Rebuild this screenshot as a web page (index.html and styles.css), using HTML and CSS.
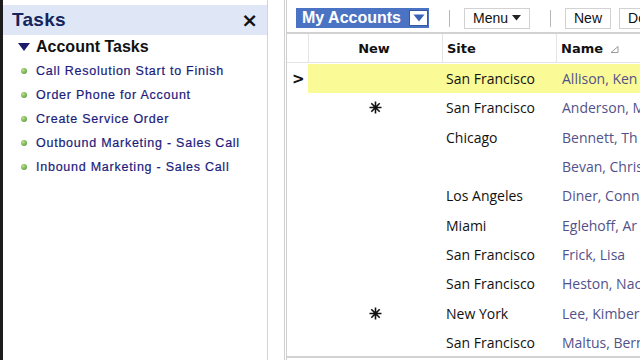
FILE: index.html
```html
<!DOCTYPE html>
<html>
<head>
<meta charset="utf-8">
<link rel="stylesheet" href="styles.css">
</head>
<body>
<div class="page">
  <aside class="tasks">
    <div class="tasks-head">
      <span class="tasks-title">Tasks</span>
      <span class="close">×</span>
    </div>
    <div class="group-title"><span class="tri"></span>Account Tasks</div>
    <ul class="task-list">
      <li><span class="dot"></span>Call Resolution Start to Finish</li>
      <li><span class="dot"></span>Order Phone for Account</li>
      <li><span class="dot"></span>Create Service Order</li>
      <li><span class="dot"></span>Outbound Marketing - Sales Call</li>
      <li><span class="dot"></span>Inbound Marketing - Sales Call</li>
    </ul>
  </aside>
  <div class="gutter"></div>
  <main class="main">
    <div class="toolbar">
      <div class="view-select">My Accounts<span class="dd"><svg width="14" height="10" viewBox="0 0 14 10"><path d="M1.5 1.5h11L7 8.5z" fill="#3a63b8"/></svg></span></div>
      <span class="sep"></span>
      <button class="btn menu">Menu <svg class="caret" width="9" height="6" viewBox="0 0 9 6"><path d="M0 0h9L4.5 5.5z" fill="#222"/></svg></button>
      <span class="sep"></span>
      <button class="btn">New</button>
      <button class="btn">De</button>
    </div>
    <div class="grid">
      <div class="row head">
        <div class="c0"></div>
        <div class="c1">New</div>
        <div class="c2">Site</div>
        <div class="c3">Name <svg class="sort" width="9" height="7" viewBox="0 0 9 7"><path d="M8 0.5V6.5H1z" fill="none" stroke="#999" stroke-width="1"/></svg></div>
      </div>
      <div class="row sel"><div class="c0">&gt;</div><div class="c1"></div><div class="c2">San Francisco</div><div class="c3">Allison, Ken</div></div>
      <div class="row"><div class="c0"></div><div class="c1"><svg class="star" width="13" height="13" viewBox="0 0 13 13"><path d="M6.5 0.5v12M0.5 6.5h12M2.3 2.3l8.4 8.4M10.7 2.3l-8.4 8.4" stroke="#111" stroke-width="1.6"/></svg></div><div class="c2">San Francisco</div><div class="c3">Anderson, M</div></div>
      <div class="row"><div class="c0"></div><div class="c1"></div><div class="c2">Chicago</div><div class="c3">Bennett, Th</div></div>
      <div class="row"><div class="c0"></div><div class="c1"></div><div class="c2"></div><div class="c3">Bevan, Chris</div></div>
      <div class="row"><div class="c0"></div><div class="c1"></div><div class="c2">Los Angeles</div><div class="c3">Diner, Conn</div></div>
      <div class="row"><div class="c0"></div><div class="c1"></div><div class="c2">Miami</div><div class="c3">Eglehoff, Ar</div></div>
      <div class="row"><div class="c0"></div><div class="c1"></div><div class="c2">San Francisco</div><div class="c3">Frick, Lisa</div></div>
      <div class="row"><div class="c0"></div><div class="c1"></div><div class="c2">San Francisco</div><div class="c3">Heston, Nac</div></div>
      <div class="row"><div class="c0"></div><div class="c1"><svg class="star" width="13" height="13" viewBox="0 0 13 13"><path d="M6.5 0.5v12M0.5 6.5h12M2.3 2.3l8.4 8.4M10.7 2.3l-8.4 8.4" stroke="#111" stroke-width="1.6"/></svg></div><div class="c2">New York</div><div class="c3">Lee, Kimber</div></div>
      <div class="row"><div class="c0"></div><div class="c1"></div><div class="c2">San Francisco</div><div class="c3">Maltus, Bern</div></div>
    </div>
  </main>
</div>
</body>
</html>
```

FILE: styles.css
```css
html, body {
  margin: 0;
  padding: 0;
  background: #ffffff;
  width: 640px;
  height: 360px;
  overflow: hidden;
}
.page {
  display: flex;
  height: 360px;
  font-family: "Liberation Sans", Arial, sans-serif;
}
.tasks {
  width: 264px;
  border-left: 3px solid #1c1c1c;
  border-right: 1px solid #d4d4d4;
  padding-top: 5px;
  background: #fff;
  flex: none;
}
.tasks-head {
  height: 30px;
  background: #dfe7f6;
  display: flex;
  align-items: center;
  justify-content: space-between;
  padding: 0 9px 0 9px;
}
.tasks-title {
  font-size: 19px;
  font-weight: bold;
  color: #14245c;
  letter-spacing: 0.3px;
}
.close {
  font-size: 20px;
  font-weight: bold;
  color: #111;
  font-family: "DejaVu Sans", sans-serif;
}
.group-title {
  display: flex;
  align-items: center;
  height: 22px;
  margin-top: 1px;
  padding-left: 15px;
  font-size: 16px;
  font-weight: bold;
  color: #111;
}
.tri {
  width: 0;
  height: 0;
  border-left: 6px solid transparent;
  border-right: 6px solid transparent;
  border-top: 8px solid #1c1c6a;
  margin-right: 6px;
}
.task-list {
  list-style: none;
  margin: 0;
  padding: 1px 0 0 18px;
}
.task-list li {
  display: flex;
  align-items: center;
  height: 24px;
  font-size: 12.5px;
  color: #1b1b7c;
  letter-spacing: 0.75px;
  -webkit-text-stroke: 0.2px #1b1b7c;
}
.dot {
  width: 6px;
  height: 6px;
  border-radius: 50%;
  background: radial-gradient(circle at 35% 35%, #b6e08a, #4c8f2a);
  margin-right: 9px;
}
.gutter {
  width: 16px;
  flex: none;
  border-right: 3px double #cfcfcf;
  background: #fff;
}
.main {
  flex: 1;
  display: flex;
  flex-direction: column;
  min-width: 0;
}
.toolbar {
  height: 32px;
  box-sizing: border-box;
  padding-top: 4px;
  display: flex;
  align-items: center;
  padding-left: 9px;
  white-space: nowrap;
  overflow: hidden;
}
.view-select {
  display: flex;
  align-items: center;
  height: 20px;
  background: #4b73c4;
  color: #fff;
  font-weight: bold;
  font-size: 16px;
  padding-left: 6px;
  width: 133px;
  box-sizing: border-box;
  flex: none;
}
.dd {
  margin-left: auto;
  margin-right: 1px;
  width: 19px;
  height: 16px;
  box-sizing: border-box;
  background: #fff;
  border: 1px solid #3558a5;
  display: flex;
  align-items: center;
  justify-content: center;
}
.sep {
  width: 1px;
  height: 17px;
  background: #b8b8b8;
  margin: 0 14px 0 20px;
  flex: none;
}
.btn {
  height: 21px;
  border: 1px solid #d2d2d2;
  background: #fff;
  font-family: "Liberation Sans", Arial, sans-serif;
  font-size: 14px;
  color: #111;
  padding: 0 8px;
  margin-right: 8px;
  display: flex;
  align-items: center;
  flex: none;
}
.btn.menu {
  width: 66px;
  justify-content: center;
  margin-right: 0;
}
.caret {
  margin-left: 4px;
}
.grid {
  flex: 1;
  border-top: 2px solid #d2d2d2;
  border-bottom: 2px solid #d2d2d2;
  margin-bottom: 2px;
  overflow: hidden;
  font-family: "Open Sans", sans-serif;
}
.row {
  display: grid;
  grid-template-columns: 21px 134px 114px 1fr;
  height: 29.3px;
  align-items: center;
  font-size: 14px;
  white-space: nowrap;
}
.row.head {
  height: 28px;
  font-family: "DejaVu Sans", sans-serif;
  font-weight: bold;
  font-size: 13px;
  color: #111;
  border-bottom: 1px solid #e4e4e4;
  margin-bottom: 1px;
}
.row.head > div {
  height: 100%;
  display: flex;
  align-items: center;
  border-left: 1px solid #e4e4e4;
  box-sizing: border-box;
  color: #111;
}
.row.head .c0 { border-left: none; }
.row.head .c1 { justify-content: center; padding-right: 3px; }
.row.head .c2 { padding-left: 4px; }
.row.head .c3 { padding-left: 4px; }
.sort {
  margin-left: 7px;
  margin-top: 3px;
}
.c0 {
  font-family: "DejaVu Sans", sans-serif;
  font-weight: bold;
  font-size: 15px;
  padding-left: 5px;
  color: #111;
}
.c1 {
  display: flex;
  justify-content: center;
  align-items: center;
  color: #111;
}
.star {
  display: block;
}
.c2 {
  padding-left: 4px;
  color: #111;
}
.c3 {
  padding-left: 6px;
  color: #52528a;
  overflow: hidden;
}
.row.sel > div:not(.c0) {
  background: #fafa96;
  align-self: stretch;
  display: flex;
  align-items: center;
}
.row.sel .c1 { justify-content: center; }
```
